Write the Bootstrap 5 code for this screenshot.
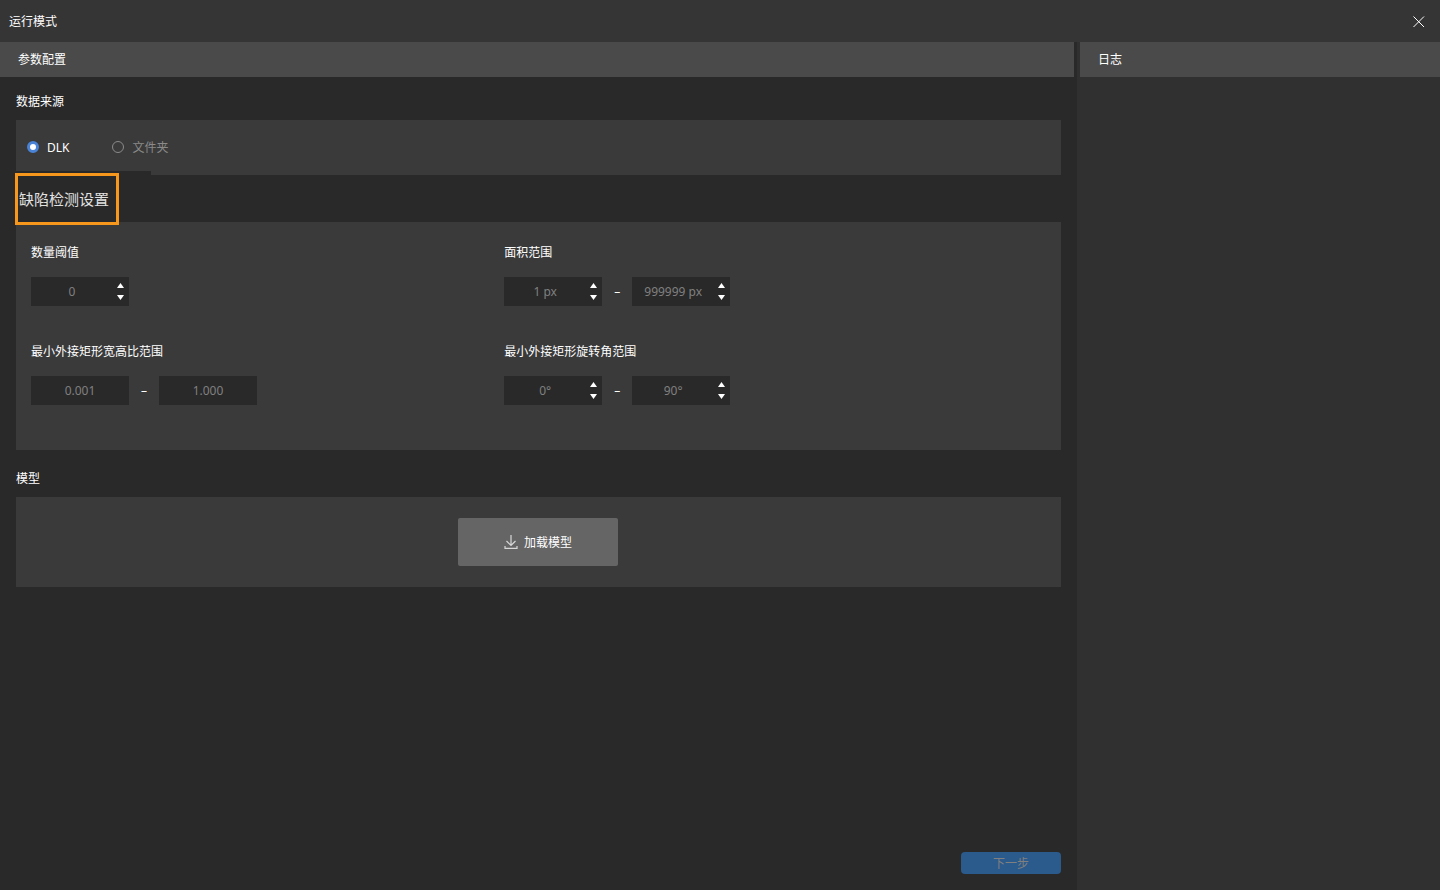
<!DOCTYPE html>
<html lang="zh-CN" data-bs-theme="dark">
<head>
<meta charset="utf-8">
<meta name="viewport" content="width=device-width, initial-scale=1">
<title>运行模式</title>
<link href="https://cdn.jsdelivr.net/npm/bootstrap@5.3.0/dist/css/bootstrap.min.css" rel="stylesheet">
<style>
  body { font: 12px/18px "Noto Sans", "Noto Sans CJK SC", sans-serif; color: #fff; background: #292929; }
  .titlebar { height: 42px; padding: 2px 13px 0 9px; background: #353535; }
  .titlebar h1, .pane-head, .section-title { font-size: 12px; line-height: 18px; font-weight: 400; margin: 0; }
  .close-btn { width: 16px; height: 16px; background: none; border: 0; padding: 0; color: #fff; }
  .config { padding-right: 3px; min-width: 0; }
  .logs { flex: 0 0 363px; padding-left: 3px; background: #303030; }
  .pane-head { height: 35px; padding: 1px 18px 0; background: #4a4a4a; }
  .config-body { padding: 0 13px 16px 16px; }
  .section-title { height: 47px; padding-top: 10px; }
  .section-title.first { height: 43px; padding-top: 7px; }
  .panel { background: #3a3a3a; }
  .source { height: 55px; padding: 0 11px; gap: 43px; }
  .source label { gap: 8px; color: #8a8a8a; }
  .source label.active { color: #fff; }
  .source input { appearance: none; width: 12px; height: 12px; margin: 0 0 2px; border: 1px solid #8a8a8a; border-radius: 50%; }
  .source input:checked { border: 3px solid #4a82d6; background: #fff; }
  .section-title.marked { position: relative; }
  .section-title.marked::before { content: ""; position: absolute; left: 0; top: -4px; width: 135px; height: 51px; background: #292929; }
  .marker { position: absolute; left: -1px; top: -2px; height: 52px; width: 104px; padding-left: 1px; border: 3px solid #f7981d; font-size: 15px; color: #e2e2e2; white-space: nowrap; }
  .settings { display: grid; grid-template-columns: 7fr 8fr; row-gap: 36px; padding: 22px 16px 45px 15px; }
  .field-label { display: block; margin-bottom: 15px; }
  .settings { row-gap: 37px; }
  .box { width: 98px; height: 29px; background: #292929; }
  .box input { min-width: 0; width: 100%; padding: 0; border: 0; background: none; color: #808080; text-align: center; }
  .steps { flex: 0 0 16px; gap: 3px; }
  .steps button { border: 0; padding: 0 1px 0 0; background: none; color: #fff; width: 16px; height: 9px; line-height: 0; }
  .dash { width: 30px; text-align: center; }
  .model { padding: 21px 22px 21px 21px; }
  .load-btn { --bs-btn-color: #fff; --bs-btn-bg: #656565; --bs-btn-border-width: 0; --bs-btn-hover-bg: #707070; --bs-btn-border-radius: 2px; width: 160px; height: 48px; font-size: 12px; line-height: 18px; gap: 6px; }
  .load-btn span { padding-top: 2px; }
  .next-btn { --bs-btn-disabled-color: #808080; --bs-btn-disabled-bg: #2b5a8c; --bs-btn-disabled-opacity: 1; --bs-btn-border-width: 0; --bs-btn-border-radius: 4px; width: 100px; height: 22px; padding: 2px 0 0; font-size: 12px; line-height: 18px; }
</style>
</head>
<body>
<div class="d-flex flex-column min-vh-100">
  <header class="titlebar d-flex align-items-center justify-content-between">
    <h1>运行模式</h1>
    <button type="button" class="close-btn d-flex align-items-center justify-content-center" aria-label="关闭">
      <svg width="12" height="12" viewBox="0 0 12 12" stroke="currentColor" stroke-width="1"><path d="M.5.5l10.5 10.5M11 .5L.5 11"/></svg>
    </button>
  </header>
  <div class="d-flex flex-grow-1">
    <main class="config d-flex flex-column flex-grow-1">
      <h2 class="pane-head d-flex align-items-center">参数配置</h2>
      <form class="config-body d-flex flex-column flex-grow-1">
        <h3 class="section-title first d-flex align-items-center">数据来源</h3>
        <div class="panel source d-flex align-items-center">
          <label class="active d-flex align-items-center" for="srcDlk"><input type="radio" name="src" id="srcDlk" checked>DLK</label>
          <label class="d-flex align-items-center" for="srcFolder"><input type="radio" name="src" id="srcFolder">文件夹</label>
        </div>

        <h3 class="section-title marked"><span class="marker d-flex align-items-center">缺陷检测设置</span></h3>
        <div class="panel settings">
          <div>
            <label class="field-label" for="count">数量阈值</label>
            <div class="box d-flex">
              <input id="count" type="text" value="0" disabled>
              <div class="steps d-flex flex-column justify-content-center">
                <button type="button" aria-label="增加"><svg width="7" height="5" viewBox="0 0 7 5" fill="currentColor"><path d="M3.5 0L7 5H0z"/></svg></button>
                <button type="button" aria-label="减少"><svg width="7" height="5" viewBox="0 0 7 5" fill="currentColor"><path d="M3.5 5L7 0H0z"/></svg></button>
              </div>
            </div>
          </div>
          <div>
            <label class="field-label" for="areaMin">面积范围</label>
            <div class="d-flex align-items-center">
              <div class="box d-flex">
                <input id="areaMin" type="text" value="1 px" disabled>
                <div class="steps d-flex flex-column justify-content-center">
                  <button type="button" aria-label="增加"><svg width="7" height="5" viewBox="0 0 7 5" fill="currentColor"><path d="M3.5 0L7 5H0z"/></svg></button>
                  <button type="button" aria-label="减少"><svg width="7" height="5" viewBox="0 0 7 5" fill="currentColor"><path d="M3.5 5L7 0H0z"/></svg></button>
                </div>
              </div>
              <span class="dash">–</span>
              <div class="box d-flex">
                <input type="text" value="999999 px" aria-label="面积上限" disabled>
                <div class="steps d-flex flex-column justify-content-center">
                  <button type="button" aria-label="增加"><svg width="7" height="5" viewBox="0 0 7 5" fill="currentColor"><path d="M3.5 0L7 5H0z"/></svg></button>
                  <button type="button" aria-label="减少"><svg width="7" height="5" viewBox="0 0 7 5" fill="currentColor"><path d="M3.5 5L7 0H0z"/></svg></button>
                </div>
              </div>
            </div>
          </div>
          <div>
            <label class="field-label" for="ratioMin">最小外接矩形宽高比范围</label>
            <div class="d-flex align-items-center">
              <div class="box d-flex"><input id="ratioMin" type="text" value="0.001" disabled></div>
              <span class="dash">–</span>
              <div class="box d-flex"><input type="text" value="1.000" aria-label="宽高比上限" disabled></div>
            </div>
          </div>
          <div>
            <label class="field-label" for="angleMin">最小外接矩形旋转角范围</label>
            <div class="d-flex align-items-center">
              <div class="box d-flex">
                <input id="angleMin" type="text" value="0°" disabled>
                <div class="steps d-flex flex-column justify-content-center">
                  <button type="button" aria-label="增加"><svg width="7" height="5" viewBox="0 0 7 5" fill="currentColor"><path d="M3.5 0L7 5H0z"/></svg></button>
                  <button type="button" aria-label="减少"><svg width="7" height="5" viewBox="0 0 7 5" fill="currentColor"><path d="M3.5 5L7 0H0z"/></svg></button>
                </div>
              </div>
              <span class="dash">–</span>
              <div class="box d-flex">
                <input type="text" value="90°" aria-label="旋转角上限" disabled>
                <div class="steps d-flex flex-column justify-content-center">
                  <button type="button" aria-label="增加"><svg width="7" height="5" viewBox="0 0 7 5" fill="currentColor"><path d="M3.5 0L7 5H0z"/></svg></button>
                  <button type="button" aria-label="减少"><svg width="7" height="5" viewBox="0 0 7 5" fill="currentColor"><path d="M3.5 5L7 0H0z"/></svg></button>
                </div>
              </div>
            </div>
          </div>
        </div>

        <h3 class="section-title d-flex align-items-center">模型</h3>
        <div class="panel model d-flex justify-content-center">
          <button type="button" class="btn load-btn d-flex align-items-center justify-content-center">
            <svg width="14" height="14" viewBox="0 0 14 14" fill="none" stroke="#d8d8d8" stroke-width="1.2"><path d="M7 0v10.5M2.5 6L7 10.5 11.5 6M1 11v2.3h12V11"/></svg>
            <span>加载模型</span>
          </button>
        </div>
        <button type="submit" class="btn btn-primary next-btn mt-auto ms-auto" disabled>下一步</button>
      </form>
    </main>
    <aside class="logs">
      <h2 class="pane-head d-flex align-items-center">日志</h2>
    </aside>
  </div>
</div>
<script src="https://cdn.jsdelivr.net/npm/bootstrap@5.3.0/dist/js/bootstrap.bundle.min.js"></script>
</body>
</html>
